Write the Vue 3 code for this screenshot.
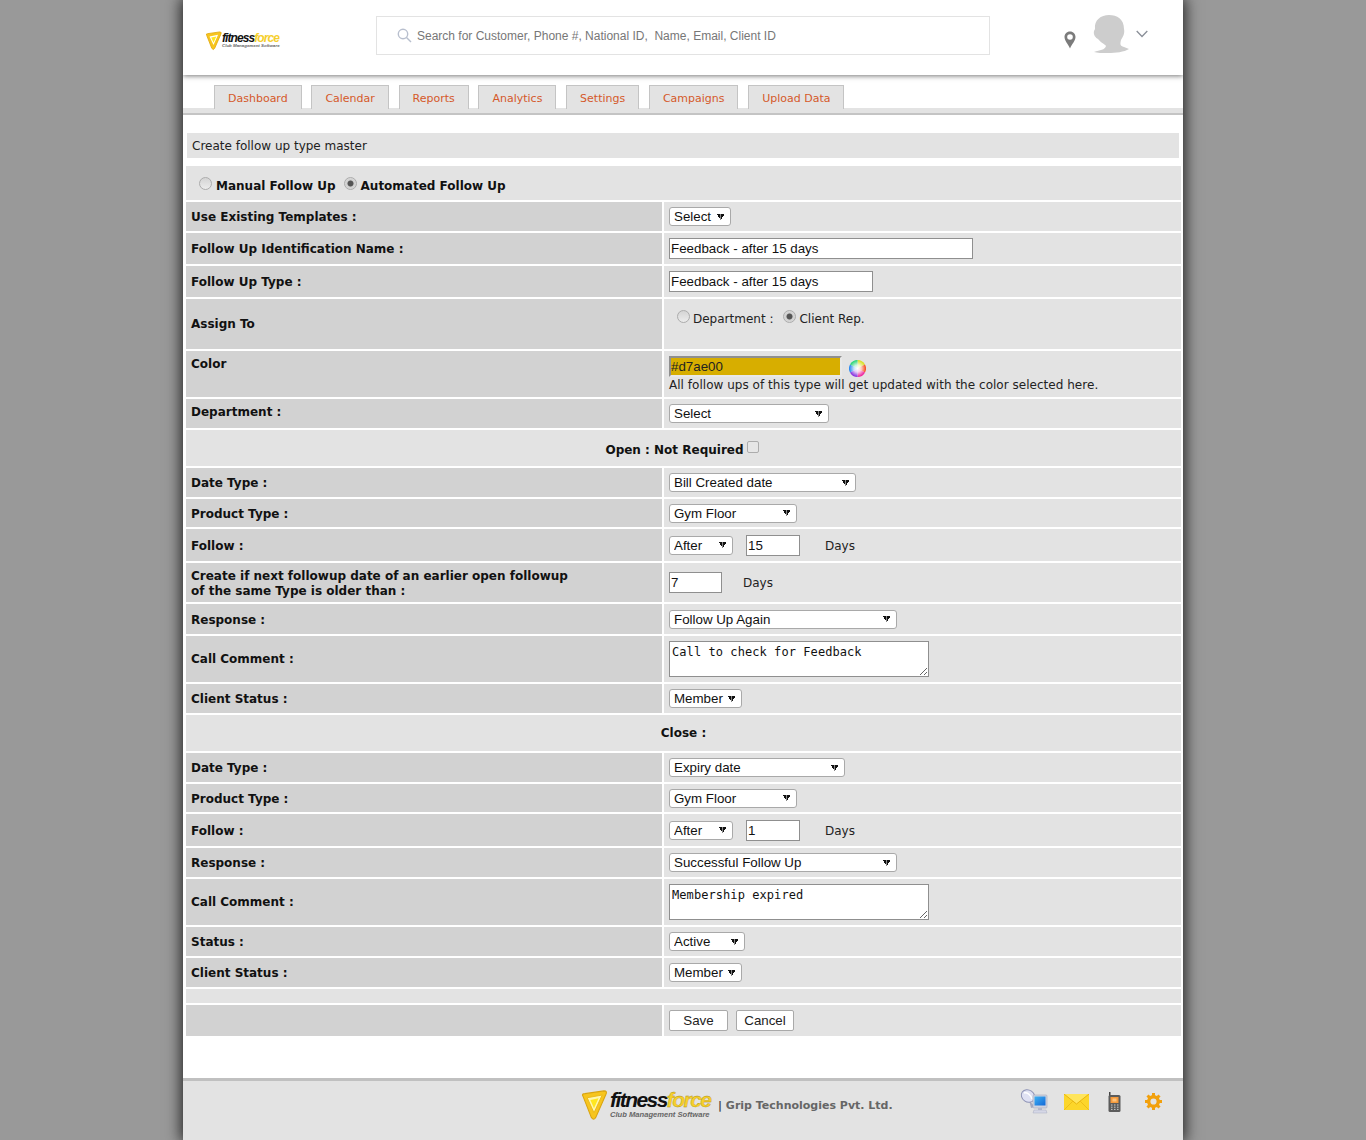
<script setup>
const tabs = ['Dashboard', 'Calendar', 'Reports', 'Analytics', 'Settings', 'Campaigns', 'Upload Data']
const sel = (w, v) => ({ t: 'select', w, v })
const inp = (w, v) => ({ t: 'input', w, v })
const rows = [
  { label: 'Use Existing Templates :', h: 29, c: [sel(62, 'Select')] },
  { label: 'Follow Up Identification Name :', h: 31, c: [inp(304, 'Feedback - after 15 days')] },
  { label: 'Follow Up Type :', h: 31, c: [inp(204, 'Feedback - after 15 days')] },
  { label: 'Assign To', h: 50, kind: 'assign' },
  { label: 'Color', h: 46, kind: 'color' },
  { label: 'Department :', h: 29, top: true, c: [sel(160, 'Select')] },
  { head: 'Open : Not Required', check: true, h: 36 },
  { label: 'Date Type :', h: 29, c: [sel(187, 'Bill Created date')] },
  { label: 'Product Type :', h: 28, nudge: true, c: [sel(128, 'Gym Floor')] },
  { label: 'Follow :', h: 32, nudge: true, c: [sel(64, 'After'), inp(54, '15'), { t: 'text', v: 'Days' }] },
  { label: 'Create if next followup date of an earlier open followup\nof the same Type is older than :', h: 39, nudge: true, multi: true, c: [inp(53, '7'), { t: 'text', v: 'Days' }] },
  { label: 'Response :', h: 30, nudge: true, c: [sel(228, 'Follow Up Again')] },
  { label: 'Call Comment :', h: 46, c: [{ t: 'area', v: 'Call to check for Feedback' }] },
  { label: 'Client Status :', h: 29, c: [sel(73, 'Member')] },
  { head: 'Close :', h: 36 },
  { label: 'Date Type :', h: 29, c: [sel(176, 'Expiry date')] },
  { label: 'Product Type :', h: 28, nudge: true, c: [sel(128, 'Gym Floor')] },
  { label: 'Follow :', h: 32, nudge: true, c: [sel(64, 'After'), inp(54, '1'), { t: 'text', v: 'Days' }] },
  { label: 'Response :', h: 29, c: [sel(228, 'Successful Follow Up')] },
  { label: 'Call Comment :', h: 46, c: [{ t: 'area', v: 'Membership expired' }] },
  { label: 'Status :', h: 29, c: [sel(76, 'Active')] },
  { label: 'Client Status :', h: 29, c: [sel(73, 'Member')] },
]
</script>

<template>
  <div class="shell">
    <header class="top">
      <div class="logo small">
        <svg width="17" height="20" viewBox="0 0 30 34">
          <path d="M3 7 Q1 4 5 4 L26 1 Q30 1 28 5 L17 30 Q15 34 12 30 Z" fill="#f7c51e" stroke="#e2a90c" stroke-width="1.5" />
          <path d="M8 9 L23 6 L15 24 Z" fill="#fff" />
          <path d="M11 11 L20 9 L15 20 Z" fill="#ffe71f" />
        </svg>
        <div class="logo-words">
          <div class="brand"><span class="b1">fitness</span><span class="b2">force</span></div>
          <div class="sub">Club Management Software</div>
        </div>
      </div>
      <div class="search">
        <svg width="15" height="15" viewBox="0 0 15 15" fill="none" stroke="#b8bfce" stroke-width="1.4">
          <circle cx="6" cy="6" r="4.7" />
          <path d="M9.5 9.5 L14 14" />
        </svg>
        <span>Search for Customer, Phone #, National ID,&nbsp; Name, Email, Client ID</span>
      </div>
      <div class="user">
        <svg class="pin" width="12" height="18" viewBox="0 0 12 18">
          <path d="M6 0.5 C2.6 0.5 0.5 3 0.5 6 C0.5 9.5 4 13 6 17.5 C8 13 11.5 9.5 11.5 6 C11.5 3 9.4 0.5 6 0.5 Z" fill="#7b7b7b" />
          <circle cx="6" cy="6" r="2.8" fill="#fff" />
        </svg>
        <svg class="avatar" width="38" height="38" viewBox="0 0 38 38">
          <path d="M2 37 C8 35 13 35 14 31 C13 29 9 28 6 24 C4 23 1 20 2 16 L3 14 C2 5 9 0 17 0 C25 0 32 4 32 14 C33 18 31 22 29 25 C28 29 28 31 32 32 L37 34 C32 37 24 38 16 38 C10 38 5 38 2 37 Z" fill="#cdcdcd" />
        </svg>
        <svg class="chev" width="12" height="8" viewBox="0 0 12 8" fill="none" stroke="#8a8f98" stroke-width="1.3">
          <path d="M0.7 1 L6 6.5 L11.3 1" />
        </svg>
      </div>
    </header>

    <nav class="tabs">
      <a v-for="t in tabs" :key="t" class="tab">{{ t }}</a>
    </nav>

    <main class="content">
      <div class="title">Create follow up type master</div>
      <div class="form">
        <div class="full mode">
          <label><input class="rad" type="radio" name="mode" /> <b>Manual Follow Up</b></label>
          <label><input class="rad" type="radio" name="mode" checked /> <b>Automated Follow Up</b></label>
        </div>

        <template v-for="(r, i) in rows" :key="i">
          <div v-if="r.head" class="full head" :class="{ openhead: r.check }" :style="{ height: r.h + 'px' }">
            <b>{{ r.head }}</b><input v-if="r.check" class="chk" type="checkbox" />
          </div>
          <div v-else class="row" :class="{ nudge: r.nudge }" :style="{ height: r.h + 'px' }">
            <div class="lab" :class="{ multi: r.multi, atop: r.kind === 'color' || r.top }">{{ r.label }}</div>
            <div class="val" :class="{ assign: r.kind === 'assign', colorcell: r.kind === 'color' }">
              <template v-if="r.kind === 'assign'">
                <label><input class="rad" type="radio" name="assign" /> Department :</label>
                <label><input class="rad" type="radio" name="assign" checked /> Client Rep.</label>
              </template>
              <template v-else-if="r.kind === 'color'">
                <div class="colorline">
                  <input class="colorinput" value="#d7ae00" readonly />
                  <svg class="wheel" width="17" height="17" viewBox="0 0 17 17">
                    <defs>
                      <radialGradient id="wheelW" cx="50%" cy="50%" r="50%">
                        <stop offset="0" stop-color="#fff" />
                        <stop offset="0.45" stop-color="#fff" stop-opacity=".75" />
                        <stop offset="1" stop-color="#fff" stop-opacity="0" />
                      </radialGradient>
                    </defs>
                    <path d="M8.5 8.5 L8.5 0 A8.5 8.5 0 0 1 16 4.5 Z" fill="#d8e02a" />
                    <path d="M8.5 8.5 L16 4.5 A8.5 8.5 0 0 1 16 12.5 Z" fill="#f6562a" />
                    <path d="M8.5 8.5 L16 12.5 A8.5 8.5 0 0 1 8.5 17 Z" fill="#ee2aa0" />
                    <path d="M8.5 8.5 L8.5 17 A8.5 8.5 0 0 1 1 12.5 Z" fill="#8a38e0" />
                    <path d="M8.5 8.5 L1 12.5 A8.5 8.5 0 0 1 1 4.5 Z" fill="#2f8cf0" />
                    <path d="M8.5 8.5 L1 4.5 A8.5 8.5 0 0 1 8.5 0 Z" fill="#2fd67c" />
                    <circle cx="8.5" cy="8.5" r="8" fill="url(#wheelW)" />
                  </svg>
                </div>
                <div class="hint">All follow ups of this type will get updated with the color selected here.</div>
              </template>
              <template v-else>
                <template v-for="(c, j) in r.c" :key="j">
                  <select v-if="c.t === 'select'" class="ctl" :style="{ width: c.w + 'px' }">
                    <option>{{ c.v }}</option>
                  </select>
                  <input v-else-if="c.t === 'input'" class="ctl txt" :style="{ width: c.w + 'px' }" :value="c.v" />
                  <textarea v-else-if="c.t === 'area'" class="area" :value="c.v"></textarea>
                  <span v-else class="days">{{ c.v }}</span>
                </template>
              </template>
            </div>
          </div>
        </template>

        <div class="full blank"></div>
        <div class="row saverow">
          <div class="lab"></div>
          <div class="val">
            <button class="btn save">Save</button>
            <button class="btn cancel">Cancel</button>
          </div>
        </div>
      </div>
    </main>

    <footer class="foot">
      <div class="foot-brand">
        <div class="logo big">
          <svg width="28" height="31" viewBox="0 0 30 34">
            <path d="M3 7 Q1 4 5 4 L26 1 Q30 1 28 5 L17 30 Q15 34 12 30 Z" fill="#f7c51e" stroke="#d9a410" stroke-width="1.2" />
            <path d="M7.5 8.5 L24 5.5 L15 25 Z" fill="#fff7b0" stroke="#e8b618" stroke-width="1" />
            <path d="M11 11 L20 9 L15 20 Z" fill="#ffe71f" />
          </svg>
          <div class="logo-words">
            <div class="brand"><span class="b1">fitness</span><span class="b2">force</span></div>
            <div class="sub">Club Management Software</div>
          </div>
        </div>
        <div class="grip"><span class="pipe">|</span> Grip Technologies Pvt. Ltd.</div>
      </div>
      <div class="foot-icons">
        <svg width="28" height="26" viewBox="0 0 28 26">
          <defs>
            <linearGradient id="screen" x1="0" y1="0" x2="1" y2="1">
              <stop offset="0" stop-color="#3fb2f2" />
              <stop offset="1" stop-color="#1268d8" />
            </linearGradient>
          </defs>
          <path d="M9 12 L15 19 L11 20 Z" fill="#a6a9bd" />
          <ellipse cx="8" cy="8" rx="7" ry="6" fill="#dfe1f3" stroke="#8d92b5" transform="rotate(35 8 8)" />
          <path d="M4 5 C7 4 11 7 12 11" stroke="#fff" stroke-width="1.4" fill="none" />
          <rect x="13" y="7" width="14" height="13" rx="1" fill="#cfd3e0" stroke="#a4a9bc" stroke-width=".6" />
          <rect x="14.5" y="8.5" width="11" height="9" fill="url(#screen)" />
          <path d="M18 20 H22 V22 H18 Z" fill="#b5b9cb" />
          <path d="M14 22 H26 L27 25 H13 Z" fill="#d5d7e6" stroke="#a8acc0" stroke-width=".5" />
        </svg>
        <svg width="25" height="16" viewBox="0 0 25 16">
          <rect width="25" height="16" fill="#fcd62a" />
          <path d="M0 0 L12.5 10 L25 0" fill="#ffe55c" stroke="#e7b40f" stroke-width="1" />
          <path d="M0 16 L9 7 M25 16 L16 7" stroke="#eebe18" stroke-width="1" />
        </svg>
        <svg width="13" height="20" viewBox="0 0 13 20">
          <rect x="1" y="0" width="1.5" height="5" fill="#444" />
          <rect x="0.5" y="3" width="12" height="17" rx="1.5" fill="#5c5c5c" />
          <rect x="2.5" y="5" width="8" height="6" fill="#f59a3c" />
          <rect x="4.5" y="6.5" width="4" height="3" fill="#ffc37a" />
          <path d="M3 13 h1.5 M6 13 h1.5 M9 13 h1.5 M3 15.2 h1.5 M6 15.2 h1.5 M9 15.2 h1.5 M3 17.4 h1.5 M6 17.4 h1.5 M9 17.4 h1.5" stroke="#c9c9c9" />
        </svg>
        <svg class="gear" width="17" height="17" viewBox="0 0 17 17">
          <circle cx="8.5" cy="8.5" r="4.8" fill="none" stroke="#f2a00c" stroke-width="3.4" />
          <path d="M8.5 0 V3.5 M8.5 13.5 V17 M0 8.5 H3.5 M13.5 8.5 H17 M2.5 2.5 L5 5 M12 12 L14.5 14.5 M14.5 2.5 L12 5 M5 12 L2.5 14.5" stroke="#f2a00c" stroke-width="3" />
        </svg>
      </div>
    </footer>
  </div>
</template>

<style>
html, body { margin: 0; background: #999; }
body { overflow: hidden; }
</style>

<style scoped>
.shell {
  width: 1000px;
  height: 1140px;
  margin-left: 183px;
  background: #fff;
  box-shadow: 0 0 14px 2px #222;
  display: flex;
  flex-direction: column;
  font-family: "DejaVu Sans", Verdana, sans-serif;
  color: #111;
  overflow: hidden;
}
.top {
  height: 75px;
  flex: none;
  display: flex;
  align-items: center;
  position: relative;
  box-shadow: 0 1px 5px #777;
  z-index: 1;
}
.logo { display: flex; align-items: center; }
.logo.small { width: 193px; padding: 6px 0 0 22px; box-sizing: border-box; }
.logo svg { flex: none; }
.logo-words { line-height: 1; }
.brand {
  font-family: "Liberation Sans", sans-serif;
  font-weight: 700;
  font-style: italic;
  white-space: nowrap;
}
.b1 { color: #111; }
.b2 { color: #f6cf2c; }
.sub {
  font-family: "Liberation Sans", sans-serif;
  font-weight: 700;
  font-style: italic;
  color: #666;
  white-space: nowrap;
}
.small .brand { font-size: 12px; letter-spacing: -0.92px; }
.small .sub { font-size: 4.4px; }
.search {
  width: 614px;
  height: 39px;
  box-sizing: border-box;
  border: 1px solid #e3e3e3;
  display: flex;
  align-items: center;
  gap: 5px;
  padding-left: 20px;
  margin-top: -4px;
  font: 12px "Liberation Sans", sans-serif;
  color: #777;
}
.user {
  flex: 1;
  display: flex;
  align-items: flex-start;
  padding-left: 74px;
  height: 75px;
}
.pin { margin-top: 31px; }
.avatar { margin-top: 15px; margin-left: 16px; }
.chev { margin-top: 30px; margin-left: 6px; }

.tabs {
  flex: none;
  height: 40px;
  box-sizing: border-box;
  display: flex;
  align-items: flex-end;
  gap: 9.7px;
  padding: 0 0 4px 31px;
  border-bottom: 2px solid #c4c4c4;
  background: linear-gradient(#fff 0, #fff 33px, #e3e3e3 33px);
}
.tab {
  box-sizing: border-box;
  height: 24px;
  padding: 0 13px;
  background: #e3e3e3;
  border: 1px solid #c4c4c4;
  border-bottom: 0;
  font-size: 11px;
  line-height: 25px;
  color: #d5592a;
}

.content { flex: none; padding: 18px 2px 0 3px; height: 963px; box-sizing: border-box; }
.title {
  margin: 0 2px 0 1px;
  height: 25px;
  background: #e3e3e3;
  padding-left: 5px;
  font-size: 12px;
  line-height: 26px;
  color: #222;
}
.form {
  margin-top: 8px;
  display: flex;
  flex-direction: column;
  gap: 2px;
  font-size: 12px;
}
.full { background: #e3e3e3; }
.rad, .chk {
  appearance: none;
  box-sizing: border-box;
  width: 13px;
  height: 13px;
  margin: 0 0 4px;
  flex: none;
  border: 1px solid #acacac;
  background: linear-gradient(#d4d4d4, #ececec);
}
.rad { border-radius: 50%; }
.rad:checked { background: radial-gradient(circle, #555 0 2.6px, #cfcfcf 3.4px, #e2e2e2 100%); }
.chk { border-radius: 2px; background: #e6e6e6; width: 12px; height: 12px; }
.mode {
  height: 34px;
  box-sizing: border-box;
  padding: 5px 0 0 13px;
  display: flex;
  gap: 8px;
  font-size: 12px;
  line-height: 20px;
}
.mode label { display: flex; align-items: center; gap: 4px; }
.head {
  display: flex;
  align-items: center;
  justify-content: center;
  font-size: 12px;
  gap: 3px;
  color: #111;
}
.openhead { box-sizing: border-box; padding: 4px 3px 0 0; }
.openhead .chk { margin-bottom: 6px; }
.row {
  display: grid;
  grid-template-columns: 476px 1fr;
  gap: 2px;
}
.lab {
  background: #d2d2d2;
  display: flex;
  align-items: center;
  padding-left: 5px;
  font-weight: 700;
  font-size: 12px;
  color: #111;
  white-space: pre-line;
}
.nudge .lab { padding-top: 2px; box-sizing: border-box; }
.lab.multi { line-height: 15px; }
.lab.atop { align-items: flex-start; padding-top: 5px; line-height: 16px; }
.val {
  background: #e3e3e3;
  display: flex;
  align-items: center;
  padding-left: 5px;
  color: #222;
  font-size: 12px;
}
.ctl {
  box-sizing: border-box;
  height: 19px;
  font: 13.33px "Liberation Sans", Arial, sans-serif;
  color: #111;
  background-color: #fff;
  margin: 0;
}
select.ctl {
  appearance: none;
  border: 1px solid #a9a9a9;
  border-radius: 3px;
  padding: 0 0 0 4px;
  background-image:
    linear-gradient(to top right, transparent 50%, #111 50%),
    linear-gradient(to top left, transparent 50%, #111 50%);
  background-repeat: no-repeat;
  background-size: 3.5px 6px;
  background-position: right 9.5px center, right 6px center;
}
.txt { height: 21px; border: 1px solid #8f8f8f; padding: 0 1px; margin-right: 13px; outline: none; }
select.ctl + .txt { margin-left: 13px; margin-right: 25px; }
.days { font-size: 12px; color: #222; margin-left: 8px; }
select.ctl + .txt + .days { margin: 2px 0 0; }
.area {
  box-sizing: border-box;
  width: 260px;
  height: 36px;
  margin: 0;
  border: 1px solid #8f8f8f;
  padding: 3px 2px 1px;
  font: 12px "DejaVu Sans Mono", monospace;
  letter-spacing: 0.07px;
  color: #111;
  background: #fff;
  outline: none;
}
.assign {
  align-items: flex-start;
  gap: 10px;
  padding: 11px 0 0 13px;
  font-size: 12px;
}
.assign label { display: flex; align-items: center; gap: 3px; line-height: 16px; }
.colorcell { flex-direction: column; align-items: flex-start; padding-top: 5px; }
.colorline { display: flex; align-items: flex-start; height: 21px; }
.colorinput {
  box-sizing: border-box;
  width: 173px;
  height: 21px;
  background: #d7ae00;
  border: 2px solid;
  border-color: #8f8f8f #e8e8e8 #e8e8e8 #8f8f8f;
  padding: 0;
  outline: none;
  font: 13.33px "Liberation Sans", Arial, sans-serif;
  color: #222;
}
.wheel { margin: 4px 0 0 7px; }
.hint { font-size: 12px; line-height: 15px; margin-top: 1px; letter-spacing: 0.027px; color: #222; white-space: nowrap; }
.blank { height: 14px; }
.saverow { height: 31px; }
.btn {
  box-sizing: border-box;
  height: 21px;
  padding: 0;
  background: #fff;
  border: 1px solid #a9a9a9;
  border-radius: 2px;
  font: 13.33px "Liberation Sans", Arial, sans-serif;
  color: #222;
}
.save { width: 59px; }
.cancel { width: 58px; margin-left: 8px; }

.foot {
  flex: 1;
  border-top: 3px solid #c0c0c0;
  background: #e3e3e3;
  display: flex;
}
.foot-brand {
  margin-left: 399px;
  margin-top: 9px;
  display: flex;
  align-items: flex-start;
  height: 34px;
}
.logo.big { width: 136px; gap: 2px; }
.logo.big svg { margin-left: -2px; }
.big .brand { font-size: 21px; letter-spacing: -1.55px; line-height: 21px; margin-top: -3px; }
.big .b2 { -webkit-text-stroke: 0.3px #a88a10; }
.big .sub { font-size: 7.6px; margin-top: 1px; }
.grip {
  font-size: 11px;
  font-weight: 700;
  color: #666;
  margin-top: 9px;
  white-space: nowrap;
}
.pipe { color: #444; }
.foot-icons {
  margin-left: auto;
  padding: 7px 21px 0 0;
  display: flex;
  gap: 16px;
  align-items: flex-start;
}
.foot-icons svg:nth-child(2) { margin-top: 6px; }
.foot-icons svg:nth-child(3) { margin: 4px 0 0 3px; }
.foot-icons svg:nth-child(4) { margin: 5px 0 0 8px; }
</style>
